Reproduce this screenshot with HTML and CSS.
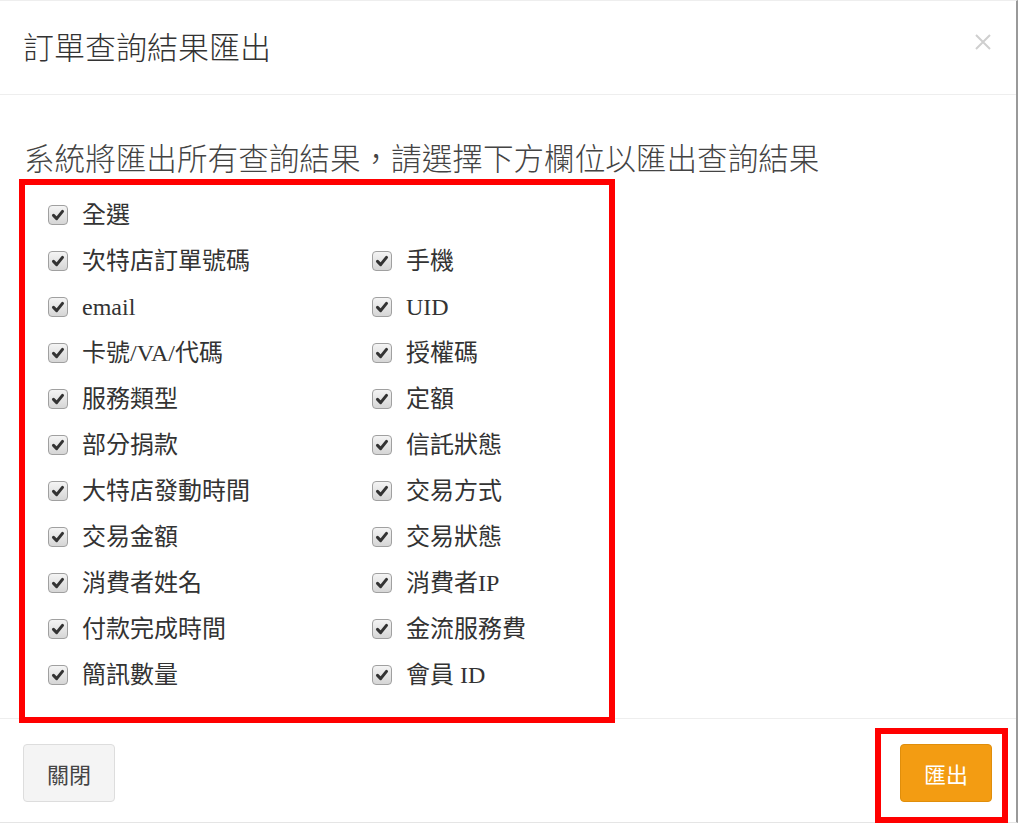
FILE: index.html
```html
<!DOCTYPE html>
<html>
  <head>
    <meta charset="UTF-8" />
    <title>訂單查詢結果匯出</title>
    <link rel="stylesheet" href="styles.css">
  </head>
  <body>
    <div class="modal">
      <header class="modal-header">
        <h1>訂單查詢結果匯出</h1>
        <button class="close-x" aria-label="close">
          <svg width="18" height="18" viewBox="0 0 18 18"><path d="M2 2 L16 16 M16 2 L2 16" stroke="#cfcfcf" stroke-width="2" fill="none"/></svg>
        </button>
      </header>

      <section class="modal-body">
        <p class="description">系統將匯出所有查詢結果，請選擇下方欄位以匯出查詢結果</p>
        <div class="fields">
          <label class="field"><span class="box"><svg viewBox="0 0 20 20"><path d="M5 10.5 L8.5 14 L15 6" stroke="#333" stroke-width="3.4" fill="none" stroke-linecap="round" stroke-linejoin="round"/></svg></span>全選</label>
          <span></span>
          <label class="field"><span class="box"><svg viewBox="0 0 20 20"><path d="M5 10.5 L8.5 14 L15 6" stroke="#333" stroke-width="3.4" fill="none" stroke-linecap="round" stroke-linejoin="round"/></svg></span>次特店訂單號碼</label>
          <label class="field"><span class="box"><svg viewBox="0 0 20 20"><path d="M5 10.5 L8.5 14 L15 6" stroke="#333" stroke-width="3.4" fill="none" stroke-linecap="round" stroke-linejoin="round"/></svg></span>手機</label>
          <label class="field"><span class="box"><svg viewBox="0 0 20 20"><path d="M5 10.5 L8.5 14 L15 6" stroke="#333" stroke-width="3.4" fill="none" stroke-linecap="round" stroke-linejoin="round"/></svg></span>email</label>
          <label class="field"><span class="box"><svg viewBox="0 0 20 20"><path d="M5 10.5 L8.5 14 L15 6" stroke="#333" stroke-width="3.4" fill="none" stroke-linecap="round" stroke-linejoin="round"/></svg></span>UID</label>
          <label class="field"><span class="box"><svg viewBox="0 0 20 20"><path d="M5 10.5 L8.5 14 L15 6" stroke="#333" stroke-width="3.4" fill="none" stroke-linecap="round" stroke-linejoin="round"/></svg></span>卡號/VA/代碼</label>
          <label class="field"><span class="box"><svg viewBox="0 0 20 20"><path d="M5 10.5 L8.5 14 L15 6" stroke="#333" stroke-width="3.4" fill="none" stroke-linecap="round" stroke-linejoin="round"/></svg></span>授權碼</label>
          <label class="field"><span class="box"><svg viewBox="0 0 20 20"><path d="M5 10.5 L8.5 14 L15 6" stroke="#333" stroke-width="3.4" fill="none" stroke-linecap="round" stroke-linejoin="round"/></svg></span>服務類型</label>
          <label class="field"><span class="box"><svg viewBox="0 0 20 20"><path d="M5 10.5 L8.5 14 L15 6" stroke="#333" stroke-width="3.4" fill="none" stroke-linecap="round" stroke-linejoin="round"/></svg></span>定額</label>
          <label class="field"><span class="box"><svg viewBox="0 0 20 20"><path d="M5 10.5 L8.5 14 L15 6" stroke="#333" stroke-width="3.4" fill="none" stroke-linecap="round" stroke-linejoin="round"/></svg></span>部分捐款</label>
          <label class="field"><span class="box"><svg viewBox="0 0 20 20"><path d="M5 10.5 L8.5 14 L15 6" stroke="#333" stroke-width="3.4" fill="none" stroke-linecap="round" stroke-linejoin="round"/></svg></span>信託狀態</label>
          <label class="field"><span class="box"><svg viewBox="0 0 20 20"><path d="M5 10.5 L8.5 14 L15 6" stroke="#333" stroke-width="3.4" fill="none" stroke-linecap="round" stroke-linejoin="round"/></svg></span>大特店發動時間</label>
          <label class="field"><span class="box"><svg viewBox="0 0 20 20"><path d="M5 10.5 L8.5 14 L15 6" stroke="#333" stroke-width="3.4" fill="none" stroke-linecap="round" stroke-linejoin="round"/></svg></span>交易方式</label>
          <label class="field"><span class="box"><svg viewBox="0 0 20 20"><path d="M5 10.5 L8.5 14 L15 6" stroke="#333" stroke-width="3.4" fill="none" stroke-linecap="round" stroke-linejoin="round"/></svg></span>交易金額</label>
          <label class="field"><span class="box"><svg viewBox="0 0 20 20"><path d="M5 10.5 L8.5 14 L15 6" stroke="#333" stroke-width="3.4" fill="none" stroke-linecap="round" stroke-linejoin="round"/></svg></span>交易狀態</label>
          <label class="field"><span class="box"><svg viewBox="0 0 20 20"><path d="M5 10.5 L8.5 14 L15 6" stroke="#333" stroke-width="3.4" fill="none" stroke-linecap="round" stroke-linejoin="round"/></svg></span>消費者姓名</label>
          <label class="field"><span class="box"><svg viewBox="0 0 20 20"><path d="M5 10.5 L8.5 14 L15 6" stroke="#333" stroke-width="3.4" fill="none" stroke-linecap="round" stroke-linejoin="round"/></svg></span>消費者IP</label>
          <label class="field"><span class="box"><svg viewBox="0 0 20 20"><path d="M5 10.5 L8.5 14 L15 6" stroke="#333" stroke-width="3.4" fill="none" stroke-linecap="round" stroke-linejoin="round"/></svg></span>付款完成時間</label>
          <label class="field"><span class="box"><svg viewBox="0 0 20 20"><path d="M5 10.5 L8.5 14 L15 6" stroke="#333" stroke-width="3.4" fill="none" stroke-linecap="round" stroke-linejoin="round"/></svg></span>金流服務費</label>
          <label class="field"><span class="box"><svg viewBox="0 0 20 20"><path d="M5 10.5 L8.5 14 L15 6" stroke="#333" stroke-width="3.4" fill="none" stroke-linecap="round" stroke-linejoin="round"/></svg></span>簡訊數量</label>
          <label class="field"><span class="box"><svg viewBox="0 0 20 20"><path d="M5 10.5 L8.5 14 L15 6" stroke="#333" stroke-width="3.4" fill="none" stroke-linecap="round" stroke-linejoin="round"/></svg></span>會員 ID</label>
        </div>
      </section>

      <footer class="modal-footer">
        <button class="btn btn-default">關閉</button>
        <button class="btn btn-warning">匯出</button>
      </footer>

      <div class="mark mark-fields"></div>
      <div class="mark mark-export"></div>
    </div>
  </body>
</html>
```

FILE: styles.css
```css
* {
  margin: 0;
  box-sizing: border-box;
}

body {
  margin: 0;
  background: #fff;
  font-family: "Liberation Serif", "Noto Sans CJK TC", serif;
  color: #333;
}

.modal {
  position: relative;
  width: 1018px;
  height: 823px;
  border-top: 1px solid #eee;
  border-right: 2px solid #999;
  border-bottom: 1px solid #e5e5e5;
  display: flex;
  flex-direction: column;
}

.modal-header {
  height: 94px;
  border-bottom: 1px solid #eee;
  display: flex;
  align-items: center;
  justify-content: space-between;
  padding: 0 24px 0 23px;
}

.modal-header h1 {
  font-family: "Noto Sans CJK TC", sans-serif;
  font-weight: 300;
  font-size: 31px;
  color: #333;
  padding-bottom: 4px;
}

.close-x {
  border: 0;
  background: none;
  padding: 0;
  margin-bottom: 12px;
  display: flex;
}

.modal-body {
  flex: 1;
  padding: 42px 0 0 24px;
}

.description {
  font-family: "Noto Sans CJK TC", sans-serif;
  font-weight: 300;
  font-size: 30.6px;
  line-height: 40px;
  color: #444;
  margin-bottom: 15px;
}

.fields {
  display: grid;
  grid-template-columns: 324px 324px;
  grid-auto-rows: 46px;
  margin-left: 24px;
}

.field {
  display: flex;
  align-items: center;
  gap: 14px;
  font-size: 24px;
  line-height: 28px;
  color: #333;
}

.box {
  flex: none;
  width: 20px;
  height: 20px;
  border: 1px solid #a0a0a0;
  border-radius: 4px;
  background: linear-gradient(#f4f4f4, #d6d6d6);
  display: flex;
}

.box svg {
  width: 100%;
  height: 100%;
}

.modal-footer {
  height: 104px;
  border-top: 1px solid #eee;
  display: flex;
  align-items: center;
  justify-content: space-between;
  padding: 4px 24px 0 23px;
}

.btn {
  width: 92px;
  height: 58px;
  border-radius: 4px;
  font-family: "Noto Sans CJK TC", sans-serif;
  font-size: 22px;
  cursor: pointer;
}

.btn-default {
  background: #f4f4f4;
  border: 1px solid #ddd;
  color: #444;
}

.btn-warning {
  background: #f39c12;
  border: 1px solid #e08e0b;
  color: #fff;
}

.mark {
  position: absolute;
  border: 6px solid #f00;
}

.mark-fields {
  left: 19px;
  top: 178px;
  width: 596px;
  height: 544px;
}

.mark-export {
  left: 875px;
  top: 727px;
  width: 133px;
  height: 95px;
}
```
